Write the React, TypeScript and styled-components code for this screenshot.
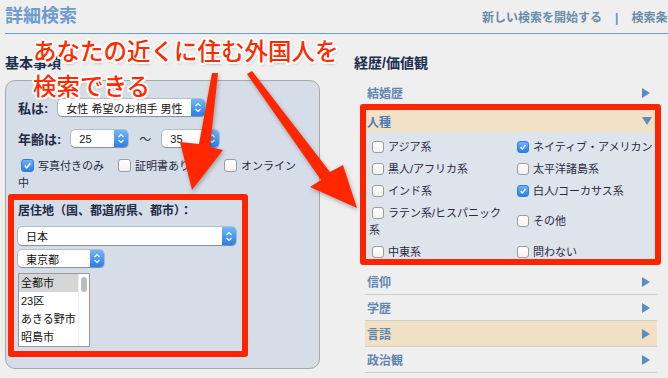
import styled, { createGlobalStyle } from "styled-components"

const GlobalStyle = createGlobalStyle`
  html, body {
    margin: 0;
    padding: 0;
    background: #efefef;
  }
  body {
    font-family: "Liberation Sans", "Noto Sans CJK JP", sans-serif;
  }
`

const Page = styled.div`
  position: relative;
  width: 668px;
  height: 378px;
  overflow: hidden;
  background: #efefef;
`

const Header = styled.div`
  display: flex;
  align-items: flex-start;
  height: 33px;
  margin-left: 5px;
  border-bottom: 1px solid #6c9bd2;
  white-space: nowrap;
`

const Title = styled.h1`
  flex: 0 0 477px;
  margin: 0;
  padding-top: 5px;
  font-size: 18px;
  line-height: 22px;
  font-weight: bold;
  color: #6e9bd0;
`

const HeaderLinks = styled.div`
  display: flex;
  padding-top: 10px;
  font-size: 12px;
  line-height: 16px;
  font-weight: bold;
  color: #6a8cab;
`

const Sep = styled.span`
  margin: 0 13px 0 13px;
  color: #5d93d0;
`

const Columns = styled.div`
  display: flex;
  padding-top: 20px;
`

const LeftCol = styled.div`
  width: 315px;
  margin-left: 5px;
`

const RightCol = styled.div`
  width: 314px;
  margin-left: 34px;
`

const SectionTitle = styled.h2`
  margin: 0 0 8px 0;
  font-size: 14px;
  line-height: 18px;
  font-weight: bold;
  color: #1c2e4d;
`

const Panel = styled.div`
  box-sizing: border-box;
  height: 289px;
  padding: 17px 12px 0 12px;
  background: #d5dee8;
  border: 1px solid #a9a9a9;
  border-radius: 10px;
`

const FieldRow = styled.div<{ $mt?: number }>`
  display: flex;
  align-items: center;
  margin-top: ${(p) => p.$mt ?? 0}px;
`

const FieldLabel = styled.span`
  margin-right: 10px;
  font-size: 13px;
  font-weight: bold;
  color: #1f2a44;
`

const Tilde = styled.span`
  margin: 0 11px 0 11px;
  font-size: 12px;
  color: #333;
`

const SelectBox = styled.div<{ $w: number; $h?: number; $mt?: number }>`
  display: flex;
  align-items: center;
  box-sizing: border-box;
  width: ${(p) => p.$w}px;
  height: ${(p) => p.$h ?? 17}px;
  margin-top: ${(p) => p.$mt ?? 0}px;
  padding-left: 8px;
  background: #fff;
  border-radius: 4px;
  box-shadow: 0 0 0 0.5px rgba(0, 0, 0, 0.3), 0 1px 1px rgba(0, 0, 0, 0.25);
  font-size: 11px;
  color: #111;
  overflow: hidden;
  white-space: nowrap;
`

const Stepper = styled.span`
  display: flex;
  align-items: center;
  justify-content: center;
  width: 14px;
  height: 100%;
  margin-left: auto;
  background: linear-gradient(#70b7fc, #2b7deb);
`

const CheckRow = styled.div`
  width: 280px;
  margin-top: 10px;
  font-size: 11px;
  line-height: 17px;
  color: #2a2840;
`

const CheckText = styled.span<{ $gap?: number }>`
  margin-right: ${(p) => p.$gap ?? 0}px;
`

const Tick = styled.span<{ $on?: boolean; $size?: number }>`
  position: relative;
  display: inline-block;
  box-sizing: border-box;
  width: ${(p) => p.$size ?? 13}px;
  height: ${(p) => p.$size ?? 13}px;
  margin: 0 4px 0 3px;
  vertical-align: -2px;
  border-radius: 3px;
  border: 1px solid ${(p) => (p.$on ? "#2f7fe0" : "#9d9d9d")};
  background: ${(p) =>
    p.$on ? "linear-gradient(#6db3fb, #2a7fea)" : "linear-gradient(#ffffff, #f2f2f2)"};
  svg {
    position: absolute;
    left: 1px;
    top: 1px;
  }
`

const LocationFrame = styled.div`
  box-sizing: border-box;
  width: 240px;
  margin: 2px 0 0 -10px;
  padding: 3px 4px 4px 4px;
  border: 6px solid #ff2400;
  border-radius: 3px;
`

const LocationTitle = styled.div`
  font-size: 12px;
  line-height: 16px;
  font-weight: bold;
  color: #1f2a44;
`

const ListBox = styled.div`
  display: flex;
  box-sizing: border-box;
  width: 72px;
  height: 74px;
  margin-top: 6px;
  background: #fff;
  border: 1px solid #999;
  overflow: hidden;
`

const ListItems = styled.div`
  flex: 1;
`

const ListItem = styled.div<{ $sel?: boolean }>`
  height: 18px;
  padding-left: 2px;
  font-size: 11px;
  line-height: 18px;
  color: #111;
  white-space: nowrap;
  background: ${(p) => (p.$sel ? "#d5d5d5" : "transparent")};
`

const ScrollTrack = styled.div`
  width: 11px;
  border-left: 1px solid #eee;
  padding: 3px 0 0 2px;
  box-sizing: border-box;
`

const ScrollThumb = styled.div`
  width: 6px;
  height: 15px;
  border-radius: 3px;
  background: #bdbdbd;
`

const CategoryList = styled.div`
  margin: 0 11px;
`

const CategoryRow = styled.div<{ $hl?: boolean }>`
  display: flex;
  align-items: center;
  justify-content: space-between;
  height: 25px;
  padding: 0 7px 0 2px;
  border-bottom: 1px solid #cfcfcf;
  background: ${(p) => (p.$hl ? "#f2e0c5" : "transparent")};
  font-size: 12px;
  font-weight: bold;
  color: #5f86b0;
`

const RaceFrame = styled.div`
  margin: -2px -4px 4px -5px;
  border: 6px solid #ff2400;
  border-radius: 3px;
`

const RaceHeader = styled.div`
  display: flex;
  align-items: center;
  justify-content: space-between;
  height: 22px;
  padding: 0 3px 0 1px;
  background: #f3e1c6;
  font-size: 12px;
  font-weight: bold;
  color: #4b7ab8;
`

const RaceGrid = styled.div`
  display: grid;
  grid-template-columns: 145px 1fr;
  align-items: center;
  box-sizing: border-box;
  height: 127px;
  padding: 4px 0 0 3px;
  background: #dde4ec;
  overflow: hidden;
`

const Option = styled.div<{ $wrap?: boolean }>`
  padding: 2.5px 3px 2.5px 0;
  font-size: 11px;
  line-height: 17px;
  color: #2a2840;
  white-space: ${(p) => (p.$wrap ? "normal" : "nowrap")};
`

const Callout = styled.div`
  position: absolute;
  left: 33px;
  top: 33px;
  font-family: "Noto Sans CJK JP", sans-serif;
  font-size: 23.5px;
  font-weight: 500;
  line-height: 35px;
  color: #ff2a00;
  white-space: nowrap;
  text-shadow: 2px 0 #fff, -2px 0 #fff, 0 2px #fff, 0 -2px #fff, 1.5px 1.5px #fff,
    -1.5px -1.5px #fff, 1.5px -1.5px #fff, -1.5px 1.5px #fff, 1px 2px 3px rgba(0, 0, 0, 0.35);
`

const ArrowLayer = styled.svg`
  position: absolute;
  left: 0;
  top: 0;
  pointer-events: none;
  filter: drop-shadow(1px 2px 2px rgba(0, 0, 0, 0.3));
`

function Chevrons() {
  return (
    <svg width="8" height="11" viewBox="0 0 8 11">
      <path d="M1.5 4 L4 1.5 L6.5 4 M1.5 7 L4 9.5 L6.5 7" fill="none" stroke="#fff" strokeWidth="1.2" />
    </svg>
  )
}

function Select({ w, h, mt, value }: { w: number; h?: number; mt?: number; value: string }) {
  return (
    <SelectBox $w={w} $h={h} $mt={mt}>
      {value}
      <Stepper>
        <Chevrons />
      </Stepper>
    </SelectBox>
  )
}

function Check({ on, size }: { on?: boolean; size?: number }) {
  const s = (size ?? 13) - 4
  return (
    <Tick $on={on} $size={size}>
      {on && (
        <svg width={s} height={s} viewBox="0 0 10 10">
          <path d="M2 5.2 L4.2 7.5 L8.2 2.5" fill="none" stroke="#fff" strokeWidth="1.8" />
        </svg>
      )}
    </Tick>
  )
}

function RightArrow() {
  return (
    <svg width="8" height="10" viewBox="0 0 8 10">
      <path d="M0 0 L8 5 L0 10 Z" fill="#5b8bc2" />
    </svg>
  )
}

function DownArrow() {
  return (
    <svg width="10" height="8" viewBox="0 0 10 8">
      <path d="M0 0 L10 0 L5 8 Z" fill="#5b8bc2" />
    </svg>
  )
}

const races: { label: string; on?: boolean; wrap?: boolean }[] = [
  { label: "アジア系" },
  { label: "ネイティブ・アメリカン", on: true },
  { label: "黒人/アフリカ系" },
  { label: "太平洋諸島系" },
  { label: "インド系" },
  { label: "白人/コーカサス系", on: true },
  { label: "ラテン系/ヒスパニック系", wrap: true },
  { label: "その他" },
  { label: "中東系" },
  { label: "問わない" },
]

const cities = ["全都市", "23区", "あきる野市", "昭島市"]

function App() {
  return (
    <Page>
      <GlobalStyle />
      <Header>
        <Title>詳細検索</Title>
        <HeaderLinks>
          <span>新しい検索を開始する</span>
          <Sep>|</Sep>
          <span>検索条件を保存</span>
        </HeaderLinks>
      </Header>

      <Columns>
        <LeftCol>
          <SectionTitle>基本事項</SectionTitle>
          <Panel>
            <FieldRow>
              <FieldLabel>私は:</FieldLabel>
              <Select w={147} value="女性 希望のお相手 男性" />
            </FieldRow>
            <FieldRow $mt={12}>
              <FieldLabel>年齢は:</FieldLabel>
              <Select w={57} value="25" />
              <Tilde>〜</Tilde>
              <Select w={57} value="35" />
            </FieldRow>
            <CheckRow>
              <Check on />
              <CheckText $gap={11}>写真付きのみ</CheckText>
              <Check />
              <CheckText $gap={31}>証明書あり</CheckText>
              <Check />
              <CheckText>オンライン中</CheckText>
            </CheckRow>
            <LocationFrame>
              <LocationTitle>居住地（国、都道府県、都市）：</LocationTitle>
              <Select w={218} h={18} mt={8} value="日本" />
              <Select w={86} mt={5} value="東京都" />
              <ListBox>
                <ListItems>
                  {cities.map((c, i) => (
                    <ListItem key={c} $sel={i === 0}>
                      {c}
                    </ListItem>
                  ))}
                </ListItems>
                <ScrollTrack>
                  <ScrollThumb />
                </ScrollTrack>
              </ListBox>
            </LocationFrame>
          </Panel>
        </LeftCol>

        <RightCol>
          <SectionTitle>経歴/価値観</SectionTitle>
          <CategoryList>
            <CategoryRow>
              結婚歴
              <RightArrow />
            </CategoryRow>
            <RaceFrame>
              <RaceHeader>
                人種
                <DownArrow />
              </RaceHeader>
              <RaceGrid>
                {races.map((r) => (
                  <Option key={r.label} $wrap={r.wrap}>
                    <Check on={r.on} size={12} />
                    {r.label}
                  </Option>
                ))}
              </RaceGrid>
            </RaceFrame>
            <CategoryRow>
              信仰
              <RightArrow />
            </CategoryRow>
            <CategoryRow>
              学歴
              <RightArrow />
            </CategoryRow>
            <CategoryRow $hl>
              言語
              <RightArrow />
            </CategoryRow>
            <CategoryRow>
              政治観
              <RightArrow />
            </CategoryRow>
          </CategoryList>
        </RightCol>
      </Columns>

      <Callout>
        あなたの近くに住む外国人を
        <br />
        検索できる
      </Callout>

      <ArrowLayer width="668" height="378" viewBox="0 0 668 378">
        <polygon points="212,73 218,73 210,147 223,150 192,190 180,142 199,144" fill="#ff2600" />
        <polygon points="247,74 252,71 330,172 343,165 357,208 310,187 321,180" fill="#ff2600" />
      </ArrowLayer>
    </Page>
  )
}

export default App
